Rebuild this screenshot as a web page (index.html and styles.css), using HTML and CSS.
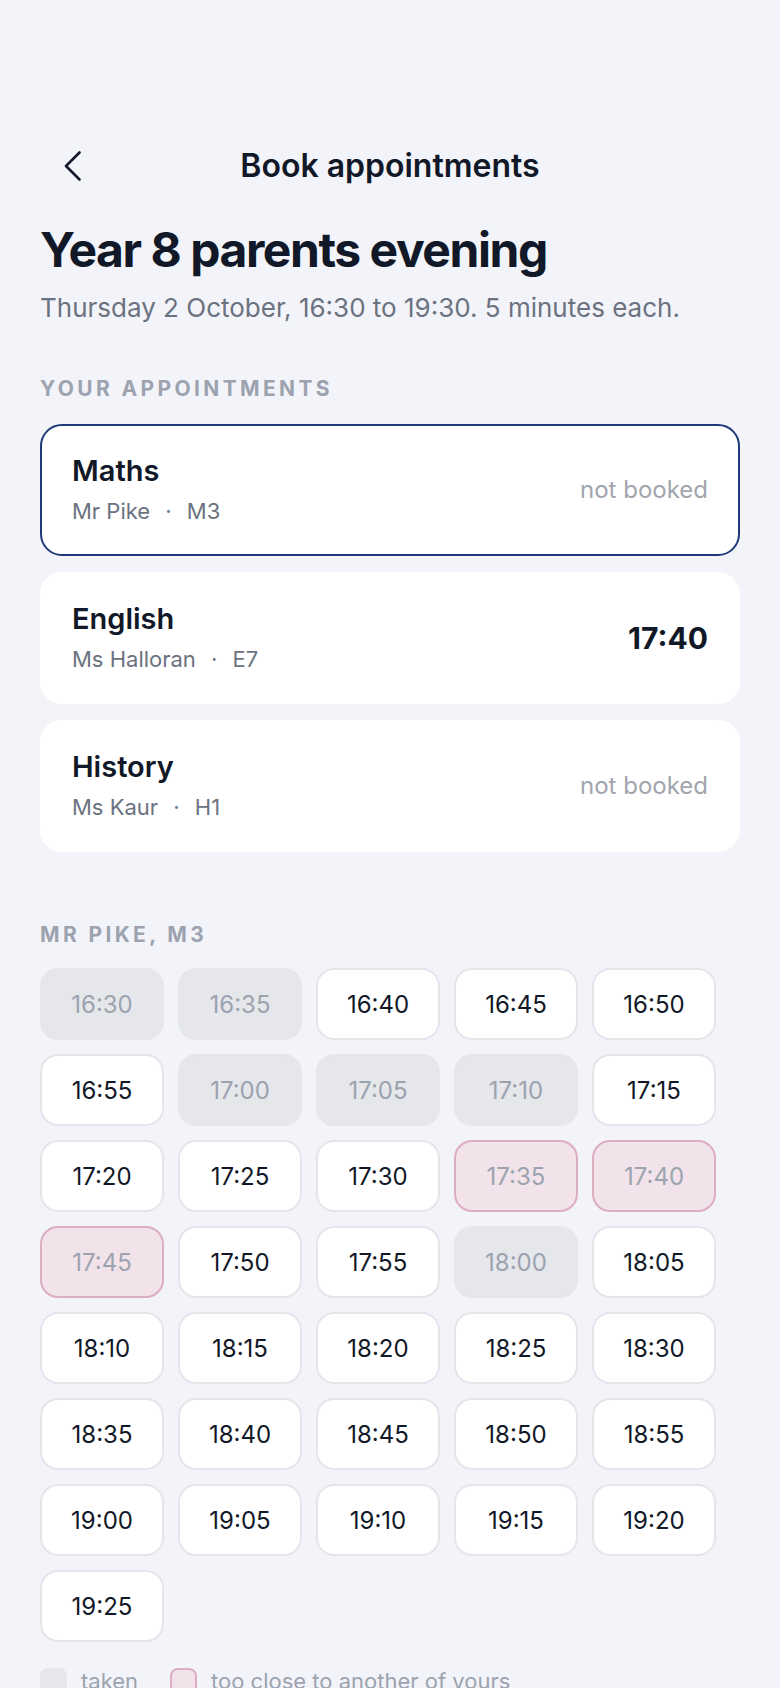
FILE: index.html
```html
<!DOCTYPE html>
<html lang="en">
<head>
<meta charset="utf-8">
<meta name="viewport" content="width=device-width, initial-scale=1">
<title>Book appointments</title>
<link rel="stylesheet" href="styles.css">
</head>
<body>
<main class="page">
  <header class="topbar">
    <button class="back" aria-label="Back">
      <svg width="18" height="30" viewBox="0 0 18 30" fill="none" stroke="#111827" stroke-width="2.6" stroke-linecap="round" stroke-linejoin="round"><polyline points="15.5,1.5 2,15 15.5,28.5"/></svg>
    </button>
    <h1 class="topbar-title">Book appointments</h1>
    <span class="spacer"></span>
  </header>

  <h2 class="event-title">Year 8 parents evening</h2>
  <p class="event-sub">Thursday 2 October, 16:30 to 19:30. 5 minutes each.</p>

  <h3 class="section-label label-appts">Your appointments</h3>
  <ul class="appts">
    <li class="appt selected">
      <div class="appt-info">
        <div class="appt-subject">Maths</div>
        <div class="appt-teacher">Mr Pike <span class="dot">·</span> M3</div>
      </div>
      <div class="appt-status">not booked</div>
    </li>
    <li class="appt">
      <div class="appt-info">
        <div class="appt-subject">English</div>
        <div class="appt-teacher">Ms Halloran <span class="dot">·</span> E7</div>
      </div>
      <div class="appt-time">17:40</div>
    </li>
    <li class="appt">
      <div class="appt-info">
        <div class="appt-subject">History</div>
        <div class="appt-teacher">Ms Kaur <span class="dot">·</span> H1</div>
      </div>
      <div class="appt-status">not booked</div>
    </li>
  </ul>

  <h3 class="section-label label-slots">Mr Pike, M3</h3>
  <div class="slots">
    <button class="slot taken">16:30</button>
    <button class="slot taken">16:35</button>
    <button class="slot">16:40</button>
    <button class="slot">16:45</button>
    <button class="slot">16:50</button>
    <button class="slot">16:55</button>
    <button class="slot taken">17:00</button>
    <button class="slot taken">17:05</button>
    <button class="slot taken">17:10</button>
    <button class="slot">17:15</button>
    <button class="slot">17:20</button>
    <button class="slot">17:25</button>
    <button class="slot">17:30</button>
    <button class="slot close">17:35</button>
    <button class="slot close">17:40</button>
    <button class="slot close">17:45</button>
    <button class="slot">17:50</button>
    <button class="slot">17:55</button>
    <button class="slot taken">18:00</button>
    <button class="slot">18:05</button>
    <button class="slot">18:10</button>
    <button class="slot">18:15</button>
    <button class="slot">18:20</button>
    <button class="slot">18:25</button>
    <button class="slot">18:30</button>
    <button class="slot">18:35</button>
    <button class="slot">18:40</button>
    <button class="slot">18:45</button>
    <button class="slot">18:50</button>
    <button class="slot">18:55</button>
    <button class="slot">19:00</button>
    <button class="slot">19:05</button>
    <button class="slot">19:10</button>
    <button class="slot">19:15</button>
    <button class="slot">19:20</button>
    <button class="slot">19:25</button>
  </div>

  <div class="legend">
    <span class="legend-item"><span class="swatch swatch-taken"></span>taken</span>
    <span class="legend-item"><span class="swatch swatch-close"></span>too close to another of yours</span>
  </div>
</main>
</body>
</html>
```

FILE: styles.css
```css
* {
  box-sizing: border-box;
}

html, body {
  margin: 0;
  padding: 0;
  background: #f3f4fa;
}

body {
  font-family: Inter, "Noto Sans", "Liberation Sans", sans-serif;
  color: #111827;
}

.page {
  padding: 138px 40px 40px 40px;
}

.topbar {
  display: grid;
  grid-template-columns: 66px 1fr 66px;
  align-items: center;
  height: 56px;
}

.back {
  display: flex;
  align-items: center;
  justify-content: center;
  width: 66px;
  height: 56px;
  padding: 0;
  border: 0;
  background: transparent;
}

.back svg {
  display: block;
  width: 18px;
  height: 30px;
}

.topbar-title {
  margin: 0;
  text-align: center;
  font-size: 32px;
  line-height: 38px;
  font-weight: 600;
  letter-spacing: 0;
  color: #111827;
}

.event-title {
  margin: 28px 0 0 0;
  font-size: 48px;
  line-height: 56px;
  font-weight: 700;
  letter-spacing: -0.03em;
  color: #111827;
}

.event-sub {
  margin: 13px 0 0 0;
  font-size: 26px;
  line-height: 34px;
  font-weight: 400;
  color: #6b7280;
}

.section-label {
  margin: 0;
  font-size: 21px;
  line-height: 24px;
  font-weight: 700;
  letter-spacing: 0.16em;
  text-transform: uppercase;
  color: #9ca3af;
}

.label-appts {
  margin-top: 52px;
}

.appts {
  list-style: none;
  margin: 23px 0 0 0;
  padding: 0;
  display: flex;
  flex-direction: column;
  gap: 16px;
}

.appt {
  display: flex;
  align-items: center;
  justify-content: space-between;
  padding: 28px 30px 29px 30px;
  background: #ffffff;
  border: 2px solid #ffffff;
  border-radius: 22px;
}

.appt.selected {
  border-color: #1e3a78;
}

.appt-info {
  display: flex;
  flex-direction: column;
  gap: 9px;
}

.appt-subject {
  font-size: 29px;
  line-height: 34px;
  font-weight: 600;
  color: #111827;
}

.appt-teacher {
  font-size: 22px;
  line-height: 28px;
  color: #6b7280;
}

.dot {
  margin: 0 9px;
}

.appt-status {
  font-size: 24px;
  line-height: 28px;
  color: #a1a5ad;
}

.appt-time {
  font-size: 30px;
  line-height: 36px;
  font-weight: 700;
  color: #111827;
}

.label-slots {
  margin-top: 71px;
}

.slots {
  margin-top: 21px;
  display: grid;
  grid-template-columns: repeat(5, 124px);
  grid-auto-rows: 72px;
  gap: 14px;
}

.slot {
  display: flex;
  align-items: center;
  justify-content: center;
  margin: 0;
  padding: 0;
  font-family: inherit;
  font-size: 24px;
  font-weight: 400;
  color: #111827;
  background: #ffffff;
  border: 2px solid #e5e6eb;
  border-radius: 18px;
}

.slot.taken {
  background: #e5e7eb;
  border-color: #e5e7eb;
  color: #9ca3af;
}

.slot.close {
  background: #f1e3e9;
  border-color: #dbafc0;
  color: #9ca3af;
}

.legend {
  margin-top: 25px;
  display: flex;
  align-items: center;
  gap: 32px;
}

.legend-item {
  display: flex;
  align-items: center;
  gap: 14px;
  font-size: 22px;
  line-height: 28px;
  color: #9ca3af;
}

.swatch {
  width: 27px;
  height: 27px;
  border-radius: 8px;
}

.swatch-taken {
  background: #e5e7eb;
}

.swatch-close {
  background: #f1e3e9;
  border: 2px solid #dbafc0;
}
```
